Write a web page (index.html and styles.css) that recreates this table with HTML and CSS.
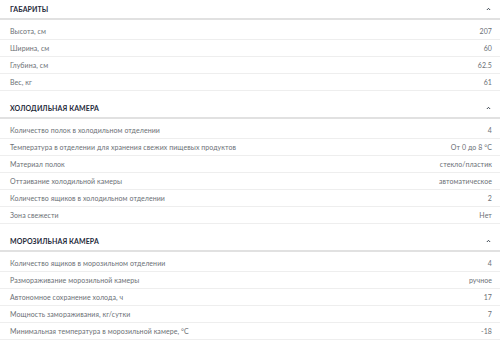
FILE: index.html
```html
<!DOCTYPE html>
<html lang="ru">
<head>
<meta charset="utf-8">
<link rel="stylesheet" href="styles.css">
</head>
<body>
<div class="specs">
  <section class="group">
    <div class="group-head"><span class="title">ГАБАРИТЫ</span><svg class="chev" viewBox="0 0 6 4" width="5" height="4"><path d="M1 3.2 L3 1.2 L5 3.2" fill="none" stroke="#2b3442" stroke-width="1.1"/></svg></div>
    <ul class="rows">
      <li class="row"><span>Высота, см</span><span>207</span></li>
      <li class="row"><span>Ширина, см</span><span>60</span></li>
      <li class="row"><span>Глубина, см</span><span>62.5</span></li>
      <li class="row"><span>Вес, кг</span><span>61</span></li>
    </ul>
  </section>
  <section class="group">
    <div class="group-head"><span class="title">ХОЛОДИЛЬНАЯ КАМЕРА</span><svg class="chev" viewBox="0 0 6 4" width="5" height="4"><path d="M1 3.2 L3 1.2 L5 3.2" fill="none" stroke="#2b3442" stroke-width="1.1"/></svg></div>
    <ul class="rows">
      <li class="row"><span>Количество полок в холодильном отделении</span><span>4</span></li>
      <li class="row"><span>Температура в отделении для хранения свежих пищевых продуктов</span><span>От 0 до 8 °C</span></li>
      <li class="row"><span>Материал полок</span><span>стекло/пластик</span></li>
      <li class="row"><span>Оттаивание холодильной камеры</span><span>автоматическое</span></li>
      <li class="row"><span>Количество ящиков в холодильном отделении</span><span>2</span></li>
      <li class="row"><span>Зона свежести</span><span>Нет</span></li>
    </ul>
  </section>
  <section class="group">
    <div class="group-head"><span class="title">МОРОЗИЛЬНАЯ КАМЕРА</span><svg class="chev" viewBox="0 0 6 4" width="5" height="4"><path d="M1 3.2 L3 1.2 L5 3.2" fill="none" stroke="#2b3442" stroke-width="1.1"/></svg></div>
    <ul class="rows">
      <li class="row"><span>Количество ящиков в морозильном отделении</span><span>4</span></li>
      <li class="row"><span>Размораживание морозильной камеры</span><span>ручное</span></li>
      <li class="row"><span>Автономное сохранение холода, ч</span><span>17</span></li>
      <li class="row"><span>Мощность замораживания, кг/сутки</span><span>7</span></li>
      <li class="row"><span>Минимальная температура в морозильной камере, °C</span><span>-18</span></li>
    </ul>
  </section>
</div>
</body>
</html>
```

FILE: styles.css
```css
* { box-sizing: border-box; }
html, body { margin: 0; padding: 0; background: #fff; }
body { font-family: "Lato", "DejaVu Sans", sans-serif; }
.specs { display: flex; flex-direction: column; gap: 8px; }
.group-head {
  height: 20px;
  padding: 0 9px 1px 10px;
  display: flex;
  align-items: center;
  justify-content: space-between;
  border-bottom: 2px solid #e1e1e1;
}
.title {
  font-size: 7px;
  font-weight: 700;
  color: #1f2a3b;
  letter-spacing: 0.1px;
}
.chev { display: block; }
.rows { list-style: none; margin: 0; padding: 3px 0 0; }
.row {
  height: 17px;
  padding: 0 8px 0 10px;
  display: flex;
  align-items: center;
  justify-content: space-between;
  border-bottom: 1px solid #eeeeee;
  font-size: 7px;
  letter-spacing: 0.08px;
  color: #6b6f75;
}
```
